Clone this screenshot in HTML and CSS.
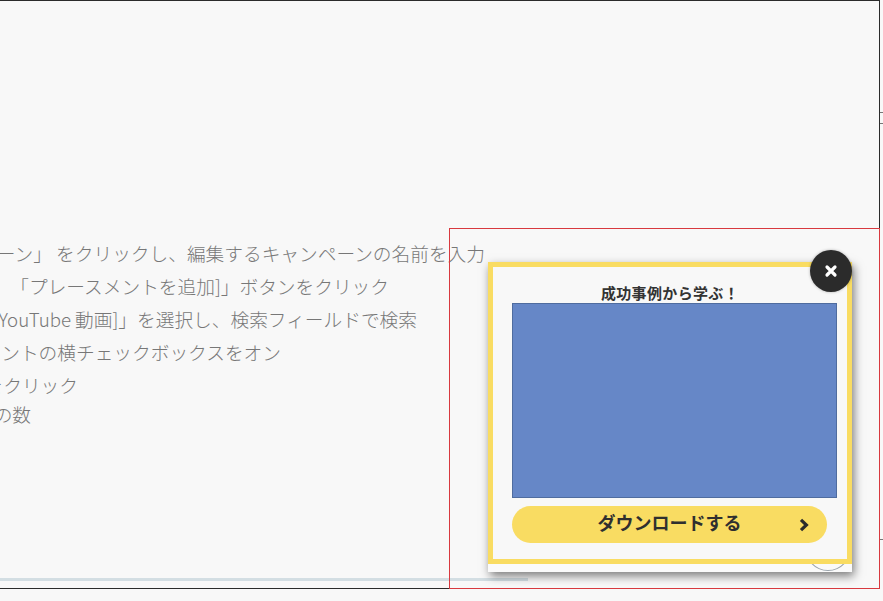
FILE: index.html
```html
<!DOCTYPE html>
<html lang="ja">
<head>
<meta charset="utf-8">
<title>成功事例から学ぶ！</title>
<link rel="stylesheet" href="styles.css">
</head>
<body>
<div class="frame">
  <div class="article">
    <p class="line line-1">ーン」 をクリックし、編集するキャンペーンの名前を入力</p>
    <p class="line line-2">「プレースメントを追加]」ボタンをクリック</p>
    <p class="line line-3">YouTube 動画]」を選択し、検索フィールドで検索</p>
    <p class="line line-4">ントの横チェックボックスをオン</p>
    <p class="line line-5">をクリック</p>
    <p class="line line-6">の数</p>
  </div>
  <div class="rule"></div>
</div>
<i class="tick tick-a"></i>
<i class="tick tick-b"></i>
<i class="tick tick-c"></i>
<div class="overlay-zone">
  <aside class="popup">
    <div class="ghost-circle"></div>
    <div class="popup-inner">
      <h2 class="popup-title">成功事例から学ぶ！</h2>
      <div class="popup-image"></div>
      <a class="popup-button">
        <span>ダウンロードする</span>
        <svg class="chevron" viewBox="0 0 10 14" width="10" height="14"><path d="M2 1.8 7.4 7 2 12.2" fill="none" stroke="#2b2b2b" stroke-width="3.2"/></svg>
      </a>
    </div>
    <button class="close" aria-label="閉じる">
      <svg viewBox="0 0 14 14" width="14" height="14"><path d="M3 3 11 11M11 3 3 11" stroke="#fff" stroke-width="3.2" stroke-linecap="round"/></svg>
    </button>
  </aside>
</div>
</body>
</html>
```
FILE: styles.css
```css
* { box-sizing: border-box; }
html, body {
  margin: 0;
  height: 601px;
  overflow: hidden;
  background: #f8f8f8;
  font-family: "Noto Sans CJK JP", "Noto Sans", sans-serif;
}
.frame {
  width: 880px;
  height: 589px;
  border-top: 1px solid #2b2b2b;
  border-right: 1px solid #2b2b2b;
  border-bottom: 1px solid #2b2b2b;
  padding-top: 239px;
  display: flex;
  flex-direction: column;
}
.article {
  height: 338px;
  color: #777;
  font-size: 18.7px;
  font-weight: 300;
}
.line {
  margin: 0 0 7px;
  height: 26px;
  line-height: 26px;
  display: flex;
  justify-content: flex-end;
  white-space: nowrap;
}
.line-1 { width: 485px; }
.line-2 { width: 389px; }
.line-3 { width: 417px; }
.line-4 { width: 281px; margin-bottom: 6.6px; }
.line-5 { width: 78px; }
.line-6 { width: 31px; margin-top: -4px; }
.rule {
  width: 528px;
  height: 3px;
  background: #d3dee3;
}
.tick {
  position: absolute;
  left: 880px;
  width: 3px;
  border-top: 1px dashed #777;
}
.tick-a { top: 112px; }
.tick-b { top: 123px; }
.tick-c { top: 539px; }
.overlay-zone {
  position: absolute;
  left: 449px;
  top: 228px;
  width: 431px;
  height: 361px;
  border: 1px solid #d8393f;
}
.popup {
  position: absolute;
  left: 38px;
  top: 33px;
  width: 364px;
  height: 310px;
  background: #fafafa;
  box-shadow: 2px 4px 9px rgba(0, 0, 0, .5);
}
.ghost-circle {
  position: absolute;
  left: 316px;
  top: 258px;
  width: 48px;
  height: 51px;
  border-radius: 50%;
  border: 1px solid #9aa3ab;
}
.popup-inner {
  position: relative;
  height: 302px;
  border: 5px solid #f9dc62;
  padding: 15.5px 19px 0;
  background: #f8f8f8;
  display: flex;
  flex-direction: column;
}
.popup-title {
  margin: 0;
  height: 20.5px;
  line-height: 20px;
  font-size: 15px;
  font-weight: 700;
  color: #333;
  text-align: center;
  letter-spacing: .35px;
}
.popup-image {
  width: 325px;
  height: 195px;
  background: #6687c7;
  border: 1px solid #4f6c9f;
}
.popup-button {
  width: 315px;
  height: 37px;
  margin-top: 8px;
  border-radius: 19px;
  background: #f9dc62;
  color: #2f2f2f;
  font-size: 18px;
  line-height: 33px;
  font-weight: 700;
  display: flex;
  align-items: flex-start;
  justify-content: center;
  position: relative;
}
.chevron {
  position: absolute;
  right: 18px;
  top: 12px;
}
.close {
  position: absolute;
  left: 322px;
  top: -12px;
  width: 42px;
  height: 42px;
  padding: 0;
  border: 0;
  border-radius: 50%;
  background: #2b2b2b;
  display: flex;
  align-items: center;
  justify-content: center;
  box-shadow: 0 0 3px rgba(0, 0, 0, .3);
}
```
